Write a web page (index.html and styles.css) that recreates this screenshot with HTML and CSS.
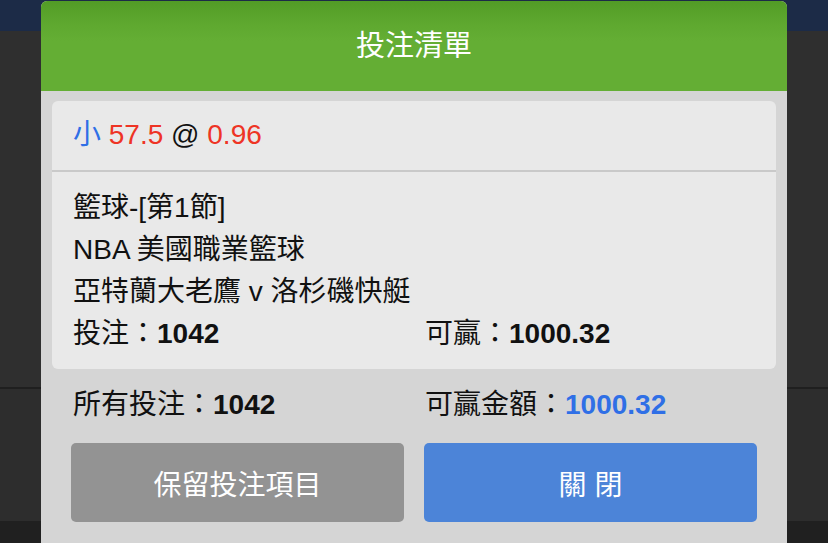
FILE: index.html
```html
<!DOCTYPE html>
<html lang="zh-Hant">
<head>
  <meta charset="UTF-8" />
  <meta name="viewport" content="width=device-width, initial-scale=1.0"/>
  <title>投注清單</title>
  <link rel="stylesheet" href="styles.css">
</head>
<body>
  <div class="page-bg">
    <div class="top-bar"></div>
    <div class="bg-main"></div>
    <div class="bg-lower"></div>
    <div class="bg-footer"></div>
  </div>

  <div class="bet-modal">
    <div class="bet-modal-header">投注清單</div>
    <div class="bet-modal-body">
      <div class="bet-card">
        <div class="bet-card-head">
          <span class="txt-blue">小</span>
          <span class="txt-red">57.5</span>
          <span>@</span>
          <span class="txt-red">0.96</span>
        </div>
        <div class="bet-card-detail">
          <div>籃球-[第1節]</div>
          <div>NBA 美國職業籃球</div>
          <div>亞特蘭大老鷹 v 洛杉磯快艇</div>
          <div class="two-col">
            <div>投注：<b>1042</b></div>
            <div>可贏：<b>1000.32</b></div>
          </div>
        </div>
      </div>

      <div class="two-col bet-summary">
        <div>所有投注：<b>1042</b></div>
        <div>可贏金額：<b class="txt-blue">1000.32</b></div>
      </div>

      <div class="bet-actions">
        <button class="btn btn-keep">保留投注項目</button>
        <button class="btn btn-close">關 閉</button>
      </div>
    </div>
  </div>
</body>
</html>
```

FILE: styles.css
```css
body {
  margin: 0;
  padding: 0;
  height: 543px;
  overflow: hidden;
  font-family: "Liberation Sans", "Noto Sans CJK TC", sans-serif;
  background: #2e2e2e;
}

.page-bg {
  display: flex;
  flex-direction: column;
  height: 543px;
}

.top-bar {
  height: 31px;
  background: #1c2b47;
}

.bg-main {
  height: 356px;
  background: #2f2f2f;
  border-bottom: 2px solid #1f1f1f;
}

.bg-lower {
  height: 132px;
  background: #2d2d2d;
}

.bg-footer {
  flex: 1;
  background: #202020;
}

.bet-modal {
  position: absolute;
  left: 41px;
  top: 1px;
  bottom: 0;
  width: 746px;
  background: #d5d5d5;
  border-radius: 6px 6px 0 0;
  overflow: hidden;
}

.bet-modal-header {
  height: 90px;
  line-height: 90px;
  text-align: center;
  color: #fff;
  font-size: 29px;
  background: linear-gradient(to bottom, #529c26 0, #5ea82f 22px, #64ae34 40px, #64ae34 100%);
}

.bet-modal-body {
  padding: 10px 11px 0;
  font-size: 28px;
  color: #111;
}

.bet-card {
  background: #e9e9e9;
  border-radius: 6px;
}

.bet-card-head {
  height: 69px;
  line-height: 68px;
  padding: 0 21px;
  border-bottom: 2px solid #c9c9c9;
}

.bet-card-detail {
  padding: 15px 21px 14px;
  line-height: 42px;
}

.two-col {
  display: grid;
  grid-template-columns: 352px 1fr;
}

.bet-summary {
  margin-top: 15px;
  padding: 0 21px;
  line-height: 42px;
}

.bet-actions {
  display: flex;
  gap: 20px;
  margin-top: 17px;
  padding: 0 19px;
}

.btn {
  flex: 1;
  height: 79px;
  border: none;
  border-radius: 5px;
  color: #fff;
  font-family: inherit;
  font-size: 28px;
  cursor: pointer;
}

.btn-keep {
  background: #939393;
}

.btn-close {
  background: #4c84d8;
}

.txt-blue {
  color: #2f6fe6;
}

.txt-red {
  color: #ee3425;
}
```
